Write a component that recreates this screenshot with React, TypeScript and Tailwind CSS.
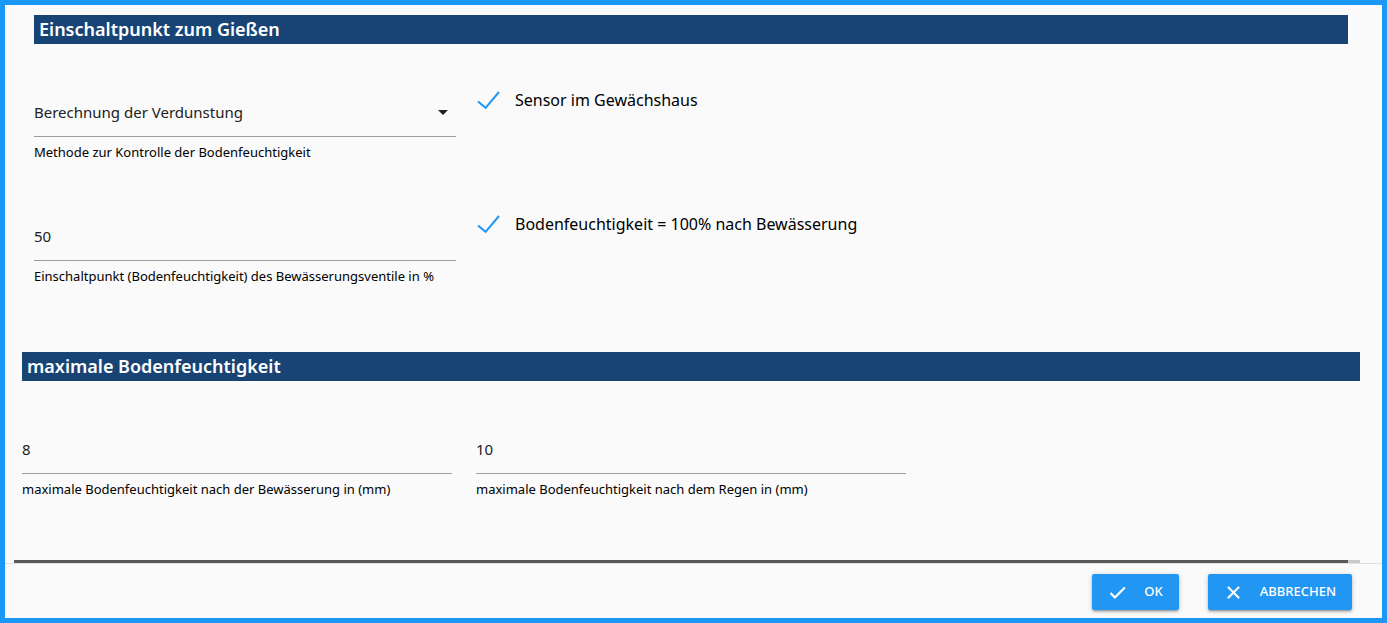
import { useId, useState } from 'react';
import type { ReactNode } from 'react';

function SectionTitle({ children }: { children: ReactNode }) {
  return (
    <h2 className="bg-[#174475] px-[5px] text-[18px] leading-[29px] font-semibold text-white">{children}</h2>
  );
}

function NumberField({ label, initial }: { label: string; initial: string }) {
  const id = useId();
  const [value, setValue] = useState(initial);
  return (
    <div className="flex flex-col gap-[7px]">
      <input
        id={id}
        type="text"
        inputMode="numeric"
        value={value}
        onChange={(e) => setValue(e.target.value)}
        className="h-12 w-full border-b border-[#9e9e9e] bg-transparent pb-[2px] text-[15px] text-[#212121] outline-none"
      />
      <label htmlFor={id} className="text-[13px] leading-4 whitespace-nowrap text-black">
        {label}
      </label>
    </div>
  );
}

function MethodField() {
  const id = useId();
  return (
    <div className="flex flex-col gap-[7px]">
      <div className="relative">
        <select
          id={id}
          className="h-12 w-full appearance-none border-b border-[#9e9e9e] bg-transparent text-[15px] text-[#212121] outline-none"
        >
          <option>Berechnung der Verdunstung</option>
        </select>
        <svg
          viewBox="0 0 24 24"
          className="pointer-events-none absolute top-[11px] right-px size-6 fill-[#212121]"
          aria-hidden="true"
        >
          <path d="M7 10l5 5 5-5z" />
        </svg>
      </div>
      <label htmlFor={id} className="text-[13px] leading-4 whitespace-nowrap text-black">
        Methode zur Kontrolle der Bodenfeuchtigkeit
      </label>
    </div>
  );
}

function CheckField({ label }: { label: string }) {
  return (
    <label className="flex h-[22px] cursor-pointer items-center text-[16px] leading-[22px] whitespace-nowrap text-black">
      <input type="checkbox" defaultChecked className="peer size-0 appearance-none" />
      <svg
        viewBox="0 0 24 20"
        className="invisible -ml-1 h-5 w-6 shrink-0 fill-none stroke-[#2196f3] stroke-2 peer-checked:visible"
        aria-hidden="true"
      >
        <path d="M2 11.5l7.6 6.3L23 2" />
      </svg>
      <span className="ml-[15px]">{label}</span>
    </label>
  );
}

function ActionButton({ icon, children }: { icon: string; children: ReactNode }) {
  return (
    <button
      type="button"
      className="flex h-9 cursor-pointer items-center gap-4 rounded-xs bg-[#2196f3] pr-4 pl-[15px] text-[13px] font-medium text-white shadow-[0_2px_2px_rgba(0,0,0,0.14),0_3px_1px_-2px_rgba(0,0,0,0.12),0_1px_5px_rgba(0,0,0,0.2)]"
    >
      <svg viewBox="0 0 24 24" className="size-[21px] fill-white stroke-white stroke-[0.6]" aria-hidden="true">
        <path d={icon} />
      </svg>
      <span>{children}</span>
    </button>
  );
}

export default function App() {
  return (
    <div className="flex min-h-screen flex-col border-[5px] border-[#1b98f7] bg-[#fafafa] font-['Noto_Sans',sans-serif]">
      <main className="flex-1 px-[17px] pt-[10px] pb-[63px]">
        <section className="mr-[5px] px-3">
          <SectionTitle>Einschaltpunkt zum Gießen</SectionTitle>
          <div className="mt-[45px] grid grid-cols-3 gap-x-6 gap-y-[53px]">
            <MethodField />
            <CheckField label="Sensor im Gewächshaus" />
            <div />
            <NumberField label="Einschaltpunkt (Bodenfeuchtigkeit) des Bewässerungsventile in %" initial="50" />
            <CheckField label="Bodenfeuchtigkeit = 100% nach Bewässerung" />
          </div>
        </section>
        <section className="mt-[68px] mr-[5px]">
          <SectionTitle>maximale Bodenfeuchtigkeit</SectionTitle>
          <div className="mt-[45px] grid grid-cols-3 gap-6">
            <NumberField label="maximale Bodenfeuchtigkeit nach der Bewässerung in (mm)" initial="8" />
            <NumberField label="maximale Bodenfeuchtigkeit nach dem Regen in (mm)" initial="10" />
          </div>
        </section>
      </main>
      <div className="mr-[22px] ml-[9px] h-[3px] bg-[#c8c8c8] pr-3">
        <div className="h-full bg-[#585858]" />
      </div>
      <footer className="flex justify-end gap-[29px] border-t border-[#e0e0e0] pt-[10px] pr-[30px] pb-2">
        <ActionButton icon="M9 16.17L4.83 12l-1.42 1.41L9 19 21 7l-1.41-1.41z">OK</ActionButton>
        <ActionButton icon="M19 6.41L17.59 5 12 10.59 6.41 5 5 6.41 10.59 12 5 17.59 6.41 19 12 13.41 17.59 19 19 17.59 13.41 12z">
          ABBRECHEN
        </ActionButton>
      </footer>
    </div>
  );
}
